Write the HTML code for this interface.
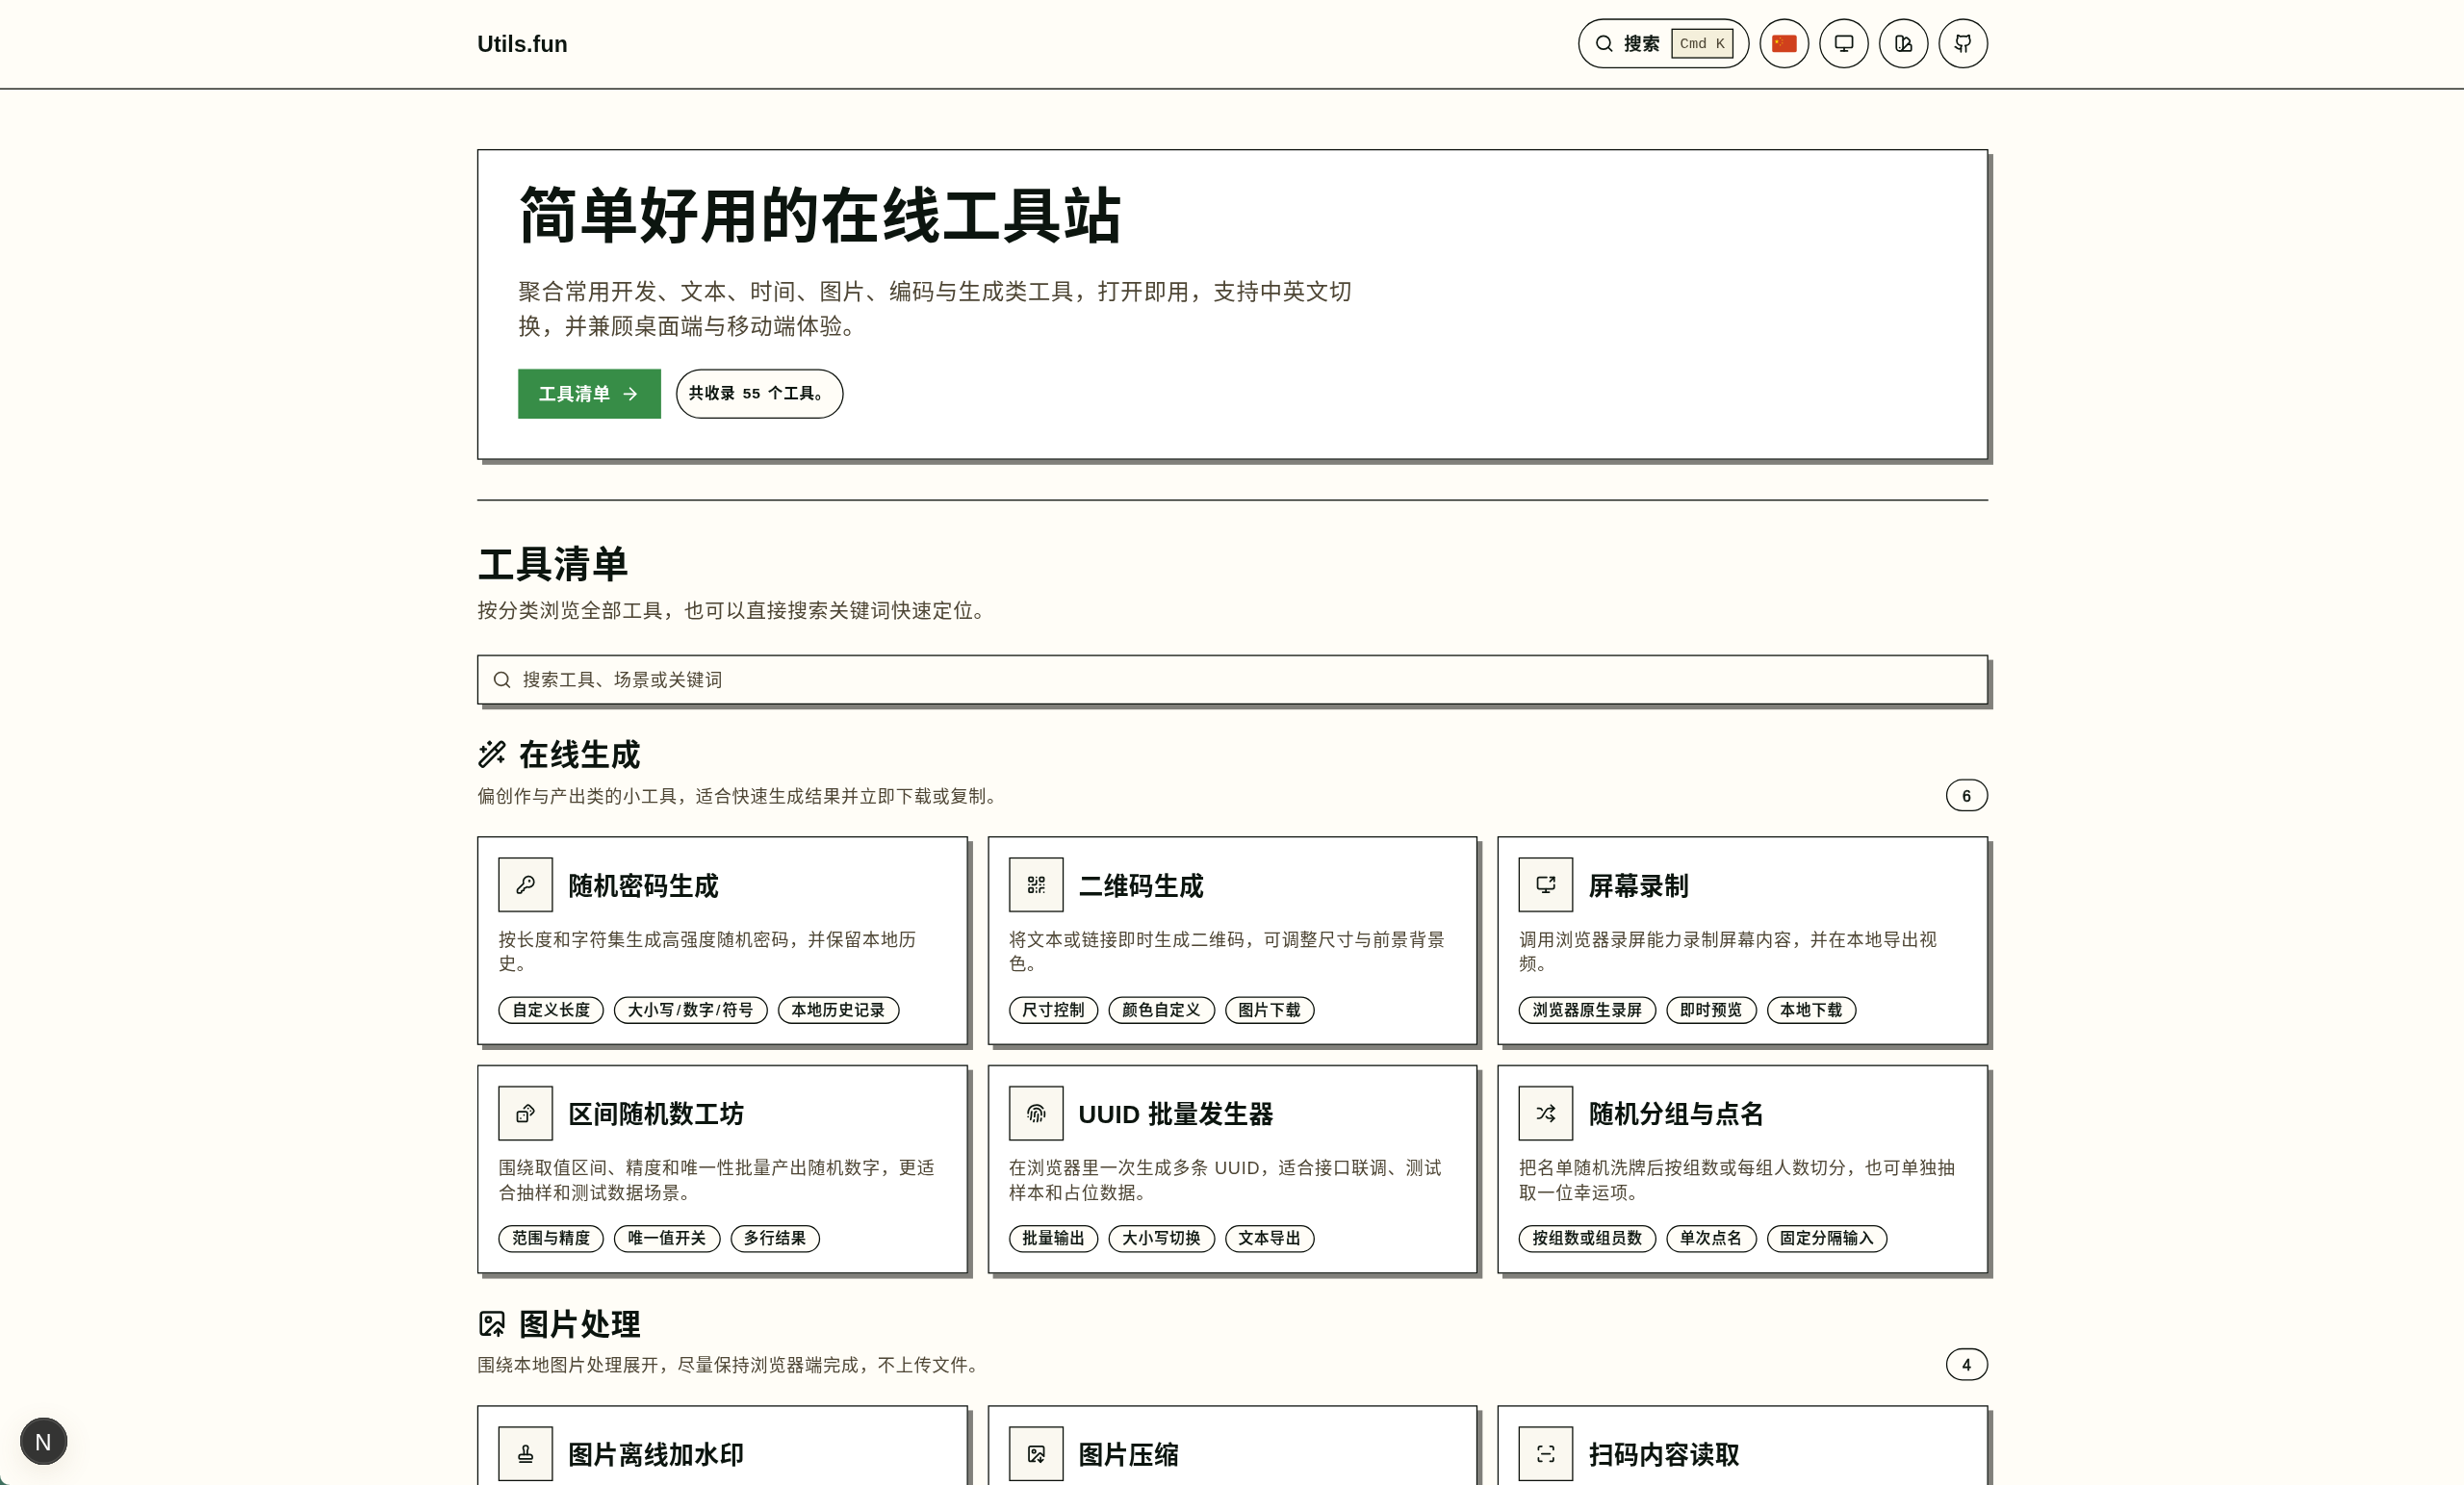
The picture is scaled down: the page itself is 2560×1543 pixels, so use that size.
<!DOCTYPE html>
<html lang="zh-CN">
<head>
<meta charset="utf-8">
<title>Utils.fun</title>
<style>
*{box-sizing:border-box;margin:0;padding:0}
html,body{background:#fffdf7;}
body{width:2560px;height:1543px;overflow:hidden;position:relative;font-family:"Liberation Sans","Noto Sans CJK SC",sans-serif;color:#0c150f;letter-spacing:.64px}
#z{transform:scale(1.29112);transform-origin:0 0;width:1982.8px;will-change:transform;}
svg.ic{width:16px;height:16px;fill:none;stroke:currentColor;stroke-width:2;stroke-linecap:round;stroke-linejoin:round;display:block;flex:none}
.wrap{width:1216px;margin-left:384.16px;}
header{height:72px;border-bottom:1px solid #0b100b;}
header .wrap{height:69.74px;display:flex;align-items:center;justify-content:space-between}
.logo{font-size:18px;font-weight:700;letter-spacing:.1px;position:relative;top:1.3px}
.nav{display:flex;gap:8px;align-items:center}
.pill{width:138.1px;height:40px;border:1px solid #0b100b;border-radius:20px;display:flex;align-items:center;padding:0 12px;gap:8px;font-size:14px;line-height:20px;font-weight:500}
.pill span{white-space:nowrap;flex:none}
.pill span:first-of-type{position:relative;top:.4px;width:29px;-webkit-text-stroke:.3px #0c150f}
.kbd{margin-left:auto;width:50.3px;text-align:center;font-family:"Liberation Mono",monospace;font-size:12px;height:23.7px;line-height:25.3px;border:1px solid #0b100b;background:#f4efdb;color:#4d4534;padding:0;font-weight:400;letter-spacing:0}
.circ{width:40px;height:40px;border:1px solid #0b100b;border-radius:50%;display:flex;align-items:center;justify-content:center}
main{padding-top:48px}
.hero{border:1px solid #0b100b;background:#fff;box-shadow:4px 4px 0 #81807b;padding:32px;height:250.2px}
.hero h1{margin-top:-1.6px;font-size:48px;line-height:48px;font-weight:700;}
.hero p{margin-top:21.6px;font-size:18px;line-height:28px;color:#4d4534;width:672px}
.hero .row{margin-top:20px;display:flex;gap:12px}
.btn{width:114.4px;height:40px;background:#378d47;color:#fff;font-size:14px;line-height:20px;font-weight:700;display:flex;align-items:center;gap:7.6px;padding:0 0 0 16.4px;letter-spacing:.5px}
.badge{line-height:16px;height:40px;border:1px solid #0b100b;border-radius:20px;background:#fffdf7;font-size:12px;font-weight:700;display:flex;align-items:center;padding:0 0 0 9.7px;width:135.5px;word-spacing:1.6px;white-space:nowrap}
hr{border:0;border-top:1px solid #0b100b;margin-top:31.6px}
h2{margin-top:34px;font-size:30px;line-height:36px;font-weight:700}
.sub{margin-top:7.2px;font-size:16px;line-height:24px;color:#4d4534;}
.search{margin-top:23px;height:40px;border:1px solid #0b100b;background:#fffdf7;box-shadow:4px 4px 0 #81807b;display:flex;align-items:center;padding:0 12px 0 10.8px;gap:8.8px;font-size:14px;line-height:20px;color:#4d4534;}
.sec{margin-top:24.2px}
.sec h3{font-size:24px;line-height:32px;font-weight:700;display:flex;align-items:center;gap:9.6px}
.sec h3 span{position:relative;top:.5px}
.sec h3 svg{width:24px;height:24px}
.sec .meta{display:flex;justify-content:space-between;align-items:flex-end;margin-top:8px;height:21.9px}
.sec .meta p{font-size:14px;line-height:20px;color:#4d4534;position:relative;top:-1.6px}
.cnt{line-height:16px;width:34.4px;height:26px;border:1px solid #0b100b;border-radius:13px;font-size:12.2px;font-weight:400;-webkit-text-stroke:.45px #0c150f;padding-right:.6px;padding-top:1.5px;display:flex;align-items:center;justify-content:center;background:#fffdf7;letter-spacing:0}
.grid{margin-top:19.8px;display:grid;grid-template-columns:repeat(3,1fr);gap:16px}
.card{border:1px solid #0b100b;background:#fff;box-shadow:4px 4px 0 #81807b;padding:16px;height:168px}
.card .top{display:flex;align-items:center;gap:12px}
.ibox{width:44px;height:44px;border:1px solid #0b100b;background:#faf8f0;display:flex;align-items:center;justify-content:center;flex:none}
.card h4{font-size:20px;line-height:28px;font-weight:700;letter-spacing:.3px;position:relative;top:.9px}
.card p{margin-top:12px;font-size:14px;line-height:20.55px;color:#4d4534;height:40px}
.tags{margin-top:16px;display:flex;gap:8px}
.tag{height:22px;border:1px solid #0b100b;border-radius:11px;background:#fffdf7;font-size:12px;line-height:20px;font-weight:500;padding:0 10px;white-space:nowrap;-webkit-text-stroke:.14px #0c150f}
.tag i{font-style:normal;margin:0 1.25px}
.nbadge{position:absolute;left:20.5px;top:1473.2px;width:49px;height:49px;border-radius:50%;background:#343433;border:0;color:#fff;font-size:24px;line-height:52.6px;text-align:center;box-shadow:inset 0 0 0 1px #343433,inset 0 0 0 2.4px #50504e,0 8px 30px rgba(120,100,60,.12);letter-spacing:0}
.wcorner{position:absolute;left:0;top:1533px;width:10px;height:10px;background:radial-gradient(circle at 100% 0,rgba(63,111,94,0) 9.2px,#3f6f5e 10.4px)}
</style>
</head>
<body>
<div id="z">
<header><div class="wrap">
  <div class="logo">Utils.fun</div>
  <div class="nav">
    <div class="pill"><svg class="ic" viewBox="0 0 24 24"><circle cx="11" cy="11" r="8"/><path d="m21 21-4.3-4.3"/></svg><span>搜索</span><span class="kbd">Cmd K</span></div>
    <div class="circ"><svg width="19.85" height="14.55" viewBox="0 0 19.85 14.55"><rect width="19.85" height="14.55" rx="1.9" fill="#d0401c"/><path fill="#ffde00" d="M3.8 3.6l.45 1.3h1.4l-1.13.84.42 1.34-1.14-.8-1.14.8.42-1.34-1.13-.84h1.400z"/><circle cx="6.650" cy="2.600" r=".42" fill="#ffde00"/><circle cx="8.300" cy="4.400" r=".42" fill="#ffde00"/><circle cx="8.300" cy="6.650" r=".42" fill="#ffde00"/><circle cx="6.650" cy="8.300" r=".42" fill="#ffde00"/></svg></div>
    <div class="circ"><svg class="ic" viewBox="0 0 24 24"><rect width="20" height="14" x="2" y="3" rx="2"/><line x1="8" x2="16" y1="21" y2="21"/><line x1="12" x2="12" y1="17" y2="21"/></svg></div>
    <div class="circ"><svg class="ic" viewBox="0 0 24 24"><path d="M11 17a4 4 0 0 1-8 0V5a2 2 0 0 1 2-2h4a2 2 0 0 1 2 2Z"/><path d="M16.700 13H19a2 2 0 0 1 2 2v4a2 2 0 0 1-2 2H7"/><path d="M7 17h.01"/><path d="m11 8 2.300-2.300a2.400 2.400 0 0 1 3.404.004L18.600 7.600a2.400 2.400 0 0 1 .026 3.434L9.900 19.800"/></svg></div>
    <div class="circ"><svg class="ic" viewBox="0 0 24 24"><path d="M15 22v-4a4.800 4.800 0 0 0-1-3.500c3 0 6-2 6-5.500.080-1.250-.270-2.480-1-3.500.280-1.150.280-2.350 0-3.500 0 0-1 0-3 1.500-2.640-.500-5.360-.500-8 0C6 2 5 2 5 2c-.300 1.150-.300 2.350 0 3.500A5.403 5.403 0 0 0 4 9c0 3.500 3 5.500 6 5.500-.390.490-.680 1.050-.850 1.650-.170.600-.220 1.230-.150 1.850v4"/><path d="M9 18c-4.510 2-5-2-7-2"/></svg></div>
  </div>
</div></header>
<main><div class="wrap">
  <section class="hero">
    <h1>简单好用的在线工具站</h1>
    <p>聚合常用开发、文本、时间、图片、编码与生成类工具，打开即用，支持中英文切换，并兼顾桌面端与移动端体验。</p>
    <div class="row">
      <div class="btn"><span>工具清单</span><svg class="ic" viewBox="0 0 24 24"><path d="M5 12h14"/><path d="m12 5 7 7-7 7"/></svg></div>
      <div class="badge">共收录 55 个工具。</div>
    </div>
  </section>
  <hr>
  <h2>工具清单</h2>
  <p class="sub">按分类浏览全部工具，也可以直接搜索关键词快速定位。</p>
  <div class="search"><svg class="ic" viewBox="0 0 24 24"><circle cx="11" cy="11" r="8"/><path d="m21 21-4.3-4.3"/></svg><span>搜索工具、场景或关键词</span></div>
  <!--SECTIONS-->
<section class="sec s0"><h3><svg class="ic" viewBox="0 0 24 24"><path d="m21.640 3.640-1.280-1.280a1.210 1.210 0 0 0-1.720 0L2.360 18.640a1.210 1.210 0 0 0 0 1.720l1.280 1.280a1.200 1.200 0 0 0 1.720 0L21.640 5.360a1.200 1.200 0 0 0 0-1.720"/><path d="m14 7 3 3"/><path d="M5 6v4"/><path d="M19 14v4"/><path d="M10 2v2"/><path d="M7 8H3"/><path d="M21 16h-4"/><path d="M11 3H9"/></svg><span>在线生成</span></h3><div class="meta"><p>偏创作与产出类的小工具，适合快速生成结果并立即下载或复制。</p><span class="cnt">6</span></div><div class="grid">
<article class="card"><div class="top"><div class="ibox"><svg class="ic" viewBox="0 0 24 24"><path d="M2.586 17.414A2 2 0 0 0 2 18.828V21a1 1 0 0 0 1 1h3a1 1 0 0 0 1-1v-1a1 1 0 0 1 1-1h1a1 1 0 0 0 1-1v-1a1 1 0 0 1 1-1h.172a2 2 0 0 0 1.414-.586l.814-.814a6.500 6.500 0 1 0-4-4z"/><circle cx="16.500" cy="7.500" r=".5" fill="currentColor"/></svg></div><h4>随机密码生成</h4></div><p>按长度和字符集生成高强度随机密码，并保留本地历史。</p><div class="tags"><span class="tag">自定义长度</span><span class="tag">大小写<i>/</i>数字<i>/</i>符号</span><span class="tag">本地历史记录</span></div></article>
<article class="card"><div class="top"><div class="ibox"><svg class="ic" viewBox="0 0 24 24"><rect width="5" height="5" x="3" y="3" rx="1"/><rect width="5" height="5" x="16" y="3" rx="1"/><rect width="5" height="5" x="3" y="16" rx="1"/><path d="M21 16h-3a2 2 0 0 0-2 2v3"/><path d="M21 21v.01"/><path d="M12 7v3a2 2 0 0 1-2 2H7"/><path d="M3 12h.01"/><path d="M12 3h.01"/><path d="M12 16v.01"/><path d="M16 12h1"/><path d="M21 12v.01"/><path d="M12 21v-1"/></svg></div><h4>二维码生成</h4></div><p>将文本或链接即时生成二维码，可调整尺寸与前景背景色。</p><div class="tags"><span class="tag">尺寸控制</span><span class="tag">颜色自定义</span><span class="tag">图片下载</span></div></article>
<article class="card"><div class="top"><div class="ibox"><svg class="ic" viewBox="0 0 24 24"><path d="M13 3H4a2 2 0 0 0-2 2v10a2 2 0 0 0 2 2h16a2 2 0 0 0 2-2v-3"/><path d="M8 21h8"/><path d="M12 17v4"/><path d="m17 8 5-5"/><path d="M17 3h5v5"/></svg></div><h4>屏幕录制</h4></div><p>调用浏览器录屏能力录制屏幕内容，并在本地导出视频。</p><div class="tags"><span class="tag">浏览器原生录屏</span><span class="tag">即时预览</span><span class="tag">本地下载</span></div></article>
<article class="card"><div class="top"><div class="ibox"><svg class="ic" viewBox="0 0 24 24"><rect width="12" height="12" x="2" y="10" rx="2" ry="2"/><path d="m17.920 14 3.500-3.500a2.240 2.240 0 0 0 0-3l-5-4.920a2.240 2.240 0 0 0-3 0L10 6"/><path d="M6 18h.01"/><path d="M10 14h.01"/><path d="M15 6h.01"/><path d="M18 9h.01"/></svg></div><h4>区间随机数工坊</h4></div><p>围绕取值区间、精度和唯一性批量产出随机数字，更适合抽样和测试数据场景。</p><div class="tags"><span class="tag">范围与精度</span><span class="tag">唯一值开关</span><span class="tag">多行结果</span></div></article>
<article class="card"><div class="top"><div class="ibox"><svg class="ic" viewBox="0 0 24 24"><path d="M12 10a2 2 0 0 0-2 2c0 1.020-.100 2.510-.260 4"/><path d="M14 13.120c0 2.380 0 6.380-1 8.880"/><path d="M17.290 21.020c.120-.600.430-2.300.500-3.020"/><path d="M2 12a10 10 0 0 1 18-6"/><path d="M2 16h.01"/><path d="M21.800 16c.200-2 .131-5.354 0-6"/><path d="M5 19.500C5.500 18 6 15 6 12a6 6 0 0 1 .340-2"/><path d="M8.650 22c.210-.660.450-1.320.570-2"/><path d="M9 6.800a6 6 0 0 1 9 5.200v2"/></svg></div><h4>UUID 批量发生器</h4></div><p>在浏览器里一次生成多条 UUID，适合接口联调、测试样本和占位数据。</p><div class="tags"><span class="tag">批量输出</span><span class="tag">大小写切换</span><span class="tag">文本导出</span></div></article>
<article class="card"><div class="top"><div class="ibox"><svg class="ic" viewBox="0 0 24 24"><path d="m18 14 4 4-4 4"/><path d="m18 2 4 4-4 4"/><path d="M2 18h1.973a4 4 0 0 0 3.300-1.700l5.454-8.600a4 4 0 0 1 3.300-1.700H22"/><path d="M2 6h1.972a4 4 0 0 1 3.600 2.200"/><path d="M22 18h-6.041a4 4 0 0 1-3.300-1.800l-.359-.450"/></svg></div><h4>随机分组与点名</h4></div><p>把名单随机洗牌后按组数或每组人数切分，也可单独抽取一位幸运项。</p><div class="tags"><span class="tag">按组数或组员数</span><span class="tag">单次点名</span><span class="tag">固定分隔输入</span></div></article>
</div></section>
<section class="sec s1"><h3><svg class="ic" viewBox="0 0 24 24"><path d="M10.300 21H5a2 2 0 0 1-2-2V5a2 2 0 0 1 2-2h14a2 2 0 0 1 2 2v10l-3.100-3.100a2 2 0 0 0-2.814.014L6 21"/><path d="m14 19.500 3-3 3 3"/><path d="M17 22v-5.500"/><circle cx="9" cy="9" r="2"/></svg><span>图片处理</span></h3><div class="meta"><p>围绕本地图片处理展开，尽量保持浏览器端完成，不上传文件。</p><span class="cnt">4</span></div><div class="grid">
<article class="card"><div class="top"><div class="ibox"><svg class="ic" viewBox="0 0 24 24"><path d="M5 22h14"/><path d="M19.270 13.730A2.500 2.500 0 0 0 17.500 13h-11A2.500 2.500 0 0 0 4 15.500V17a1 1 0 0 0 1 1h14a1 1 0 0 0 1-1v-1.500c0-.660-.260-1.300-.730-1.770Z"/><path d="M14 13V8.500C14 7 15 7 15 5a3 3 0 0 0-3-3c-1.660 0-3 1-3 3s1 2 1 3.500V13"/></svg></div><h4>图片离线加水印</h4></div></article>
<article class="card"><div class="top"><div class="ibox"><svg class="ic" viewBox="0 0 24 24"><path d="M10.300 21H5a2 2 0 0 1-2-2V5a2 2 0 0 1 2-2h14a2 2 0 0 1 2 2v10l-3.100-3.100a2 2 0 0 0-2.814.014L6 21"/><path d="m14 19 3 3v-5.500"/><path d="m17 22 3-3"/><circle cx="9" cy="9" r="2"/></svg></div><h4>图片压缩</h4></div></article>
<article class="card"><div class="top"><div class="ibox"><svg class="ic" viewBox="0 0 24 24"><path d="M3 7V5a2 2 0 0 1 2-2h2"/><path d="M17 3h2a2 2 0 0 1 2 2v2"/><path d="M21 17v2a2 2 0 0 1-2 2h-2"/><path d="M7 21H5a2 2 0 0 1-2-2v-2"/><path d="M7 12h10"/></svg></div><h4>扫码内容读取</h4></div></article>
</div></section>
<!--/SECTIONS-->
</div></main>
</div>
<div class="nbadge">N</div>
<div class="wcorner"></div>
</body>
</html>
